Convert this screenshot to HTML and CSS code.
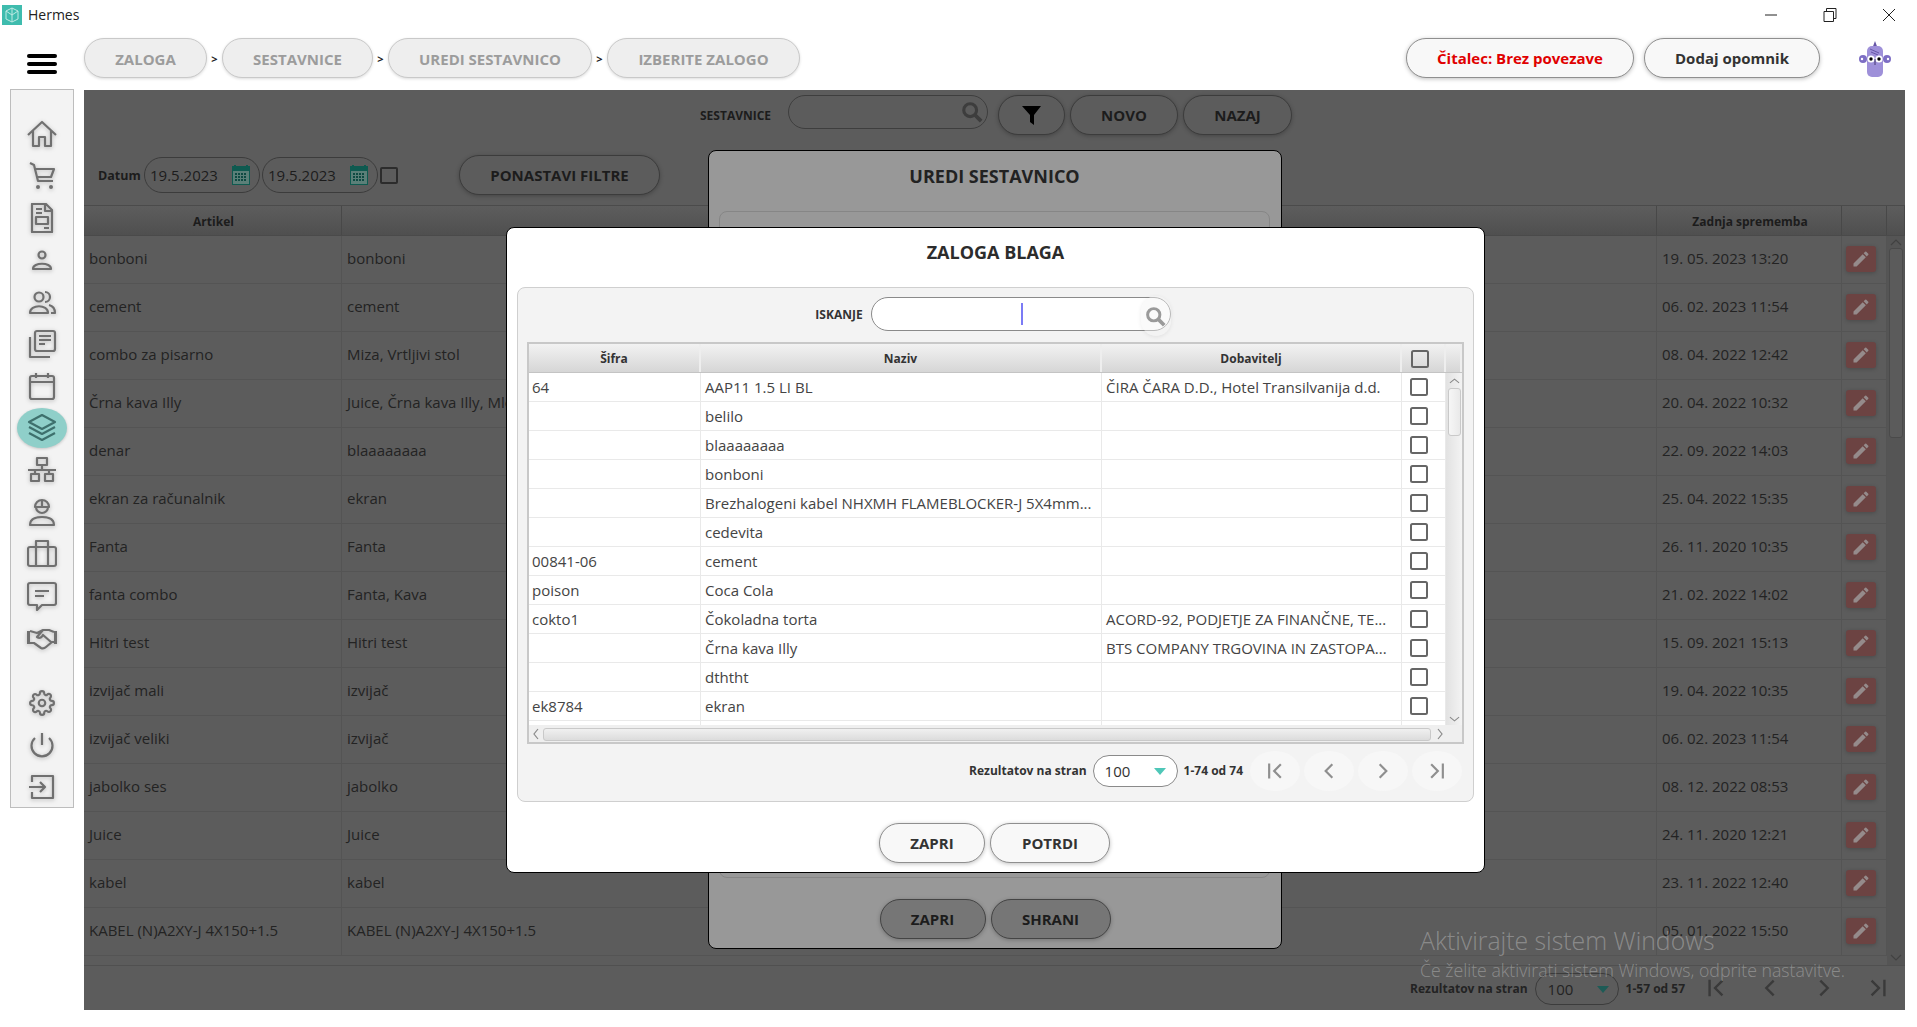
FILE: index.html
```html
<!DOCTYPE html>
<html lang="sl">
<head>
<meta charset="utf-8">
<title>Hermes</title>
<link rel="stylesheet" href="styles.css">
</head>
<body>
<svg class="sprite" aria-hidden="true">
  <symbol id="pencil" viewBox="0 0 24 24"><path d="M3 17.25V21h3.75L17.81 9.94l-3.75-3.75L3 17.25zM20.71 7.04a1 1 0 0 0 0-1.41l-2.34-2.34a1 1 0 0 0-1.41 0l-1.83 1.83 3.75 3.75 1.83-1.83z"/></symbol>
  <symbol id="first" viewBox="0 0 24 24"><path d="M5 3v18M19 4l-8 8 8 8" fill="none" stroke-width="2.6"/></symbol>
  <symbol id="prev" viewBox="0 0 24 24"><path d="M16 4l-8 8 8 8" fill="none" stroke-width="2.6"/></symbol>
  <symbol id="next" viewBox="0 0 24 24"><path d="M8 4l8 8-8 8" fill="none" stroke-width="2.6"/></symbol>
  <symbol id="last" viewBox="0 0 24 24"><path d="M19 3v18M5 4l8 8-8 8" fill="none" stroke-width="2.6"/></symbol>
  <symbol id="lens" viewBox="0 0 24 24"><circle cx="10" cy="10" r="7" fill="none" stroke-width="3.4"/><path d="M15 15l7 7" fill="none" stroke-width="4.2"/></symbol>
  <symbol id="cal" viewBox="0 0 20 20"><path d="M1 1h2V0h2v1h10V0h2v1h2v19H1z" fill="#0f5a50"/><path d="M2 6h16v13H2z" fill="#5b7f78"/><path d="M4 8h2v2H4zM7 8h2v2H7zM10 8h2v2h-2zM13 8h2v2h-2zM4 11h2v2H4zM7 11h2v2H7zM10 11h2v2h-2zM13 11h2v2h-2zM4 14h2v2H4zM7 14h2v2H7zM10 14h2v2h-2zM13 14h2v2h-2z" fill="#0f4a42"/></symbol>
</svg>

<header class="titlebar">
  <svg class="app-icon" viewBox="0 0 20 20"><rect width="20" height="20" fill="#3fbcae"/><path d="M4 6l6-3 6 3v8l-6 3-6-3zM10 3v14M4 6l6 4 6-4" fill="none" stroke="#bfeae4" stroke-width="1"/></svg>
  <span class="app-name">Hermes</span>
  <div class="win-controls">
    <svg class="win-ic" viewBox="0 0 16 16"><path d="M2 8h12" /></svg>
    <svg class="win-ic" viewBox="0 0 16 16"><path d="M2 4.500h9.500v10H2zM4.500 4.500V1.500h9.500v10h-2.500"/></svg>
    <svg class="win-ic" viewBox="0 0 16 16"><path d="M2 2l12 12M14 2L2 14"/></svg>
  </div>
</header>

<div class="topbar">
  <div class="burger"><i></i><i></i><i></i></div>
  <nav class="crumbs">
    <a class="crumb c1">ZALOGA</a><b class="sep">&gt;</b>
    <a class="crumb c2">SESTAVNICE</a><b class="sep">&gt;</b>
    <a class="crumb c3">UREDI SESTAVNICO</a><b class="sep">&gt;</b>
    <a class="crumb c4">IZBERITE ZALOGO</a>
  </nav>
  <button class="pill reader">Čitalec: Brez povezave</button>
  <button class="pill remind">Dodaj opomnik</button>
  <svg class="avatar" viewBox="0 0 32 37">
    <path d="M13 9l3-8 3 8z" fill="#6656a6"/>
    <rect x="8" y="6" width="16" height="31" rx="5" fill="#9e90d9"/>
    <path d="M11 9l9 4M12 12l7 3" stroke="#6656a6" stroke-width="1"/>
    <circle cx="4" cy="19" r="4" fill="#7d6ec4"/><circle cx="28" cy="19" r="4" fill="#7d6ec4"/>
    <circle cx="3" cy="19" r="1.200" fill="#fff"/><circle cx="29" cy="19" r="1.200" fill="#fff"/>
    <circle cx="12" cy="19" r="3.600" fill="#fff"/><circle cx="20" cy="19" r="3.600" fill="#fff"/>
    <circle cx="12" cy="19" r="1.700"/><circle cx="20" cy="19" r="1.700"/>
    <path d="M16 19v6" stroke="#44386f" stroke-width="1"/>
  </svg>
</div>

<div class="workspace">
  <aside class="sidebar">
    <a class="nav"><svg class="ic" viewBox="0 0 30 30"><path d="M1 16L15 3l14 13M6 12v15h6v-9h6v9h6V12"/></svg></a>
    <a class="nav"><svg class="ic" viewBox="0 0 30 30"><path d="M3 2l4 2 4 16h15M7 8h20l-3 8H10"/><circle class="fill" cx="11" cy="26" r="2"/><circle class="fill" cx="24" cy="26" r="2"/></svg></a>
    <a class="nav"><svg class="ic" viewBox="0 0 30 30"><path d="M5 1h14l6 6v22H5zM18 1v7h7M9 6h6M9 10h6M9 14h12v7H9zM17 25h5"/></svg></a>
    <a class="nav"><svg class="ic" viewBox="0 0 30 30"><circle cx="15" cy="10" r="3.500"/><path d="M6 24c0-7 18-7 18 0z"/></svg></a>
    <a class="nav"><svg class="ic" viewBox="0 0 30 30"><circle cx="12" cy="10" r="4.500"/><path d="M3 26c0-9 18-9 18 0zM18 5a5 5 0 0 1 0 10M22 18c4 1 6 4 6 8h-4"/></svg></a>
    <a class="nav"><svg class="ic" viewBox="0 0 30 30"><rect x="8" y="2" width="20" height="20" rx="2"/><path d="M12 7h12M12 11h12M12 15h6M3 8v20h20"/></svg></a>
    <a class="nav"><svg class="ic" viewBox="0 0 30 30"><rect x="3" y="5" width="24" height="23" rx="2"/><path d="M3 11h24M9 2v5M21 2v5"/></svg></a>
    <a class="nav active"><svg class="ic layers" viewBox="0 0 30 30"><path d="M15 2l13 7-13 7L2 9zM2 14l13 7 13-7M2 20l13 7 13-7"/></svg></a>
    <a class="nav"><svg class="ic" viewBox="0 0 30 30"><rect x="10" y="3" width="10" height="7"/><path d="M15 10v5M1 15h28M8 15v4M22 15v4"/><rect x="4" y="19" width="8" height="7"/><rect x="18" y="19" width="8" height="7"/></svg></a>
    <a class="nav"><svg class="ic" viewBox="0 0 30 30"><path d="M8 10a7 7 0 0 1 14 0zM15 3v7M9 10a6 6 0 0 0 12 0M3 28c0-7 8-8 12-8s12 1 12 8z"/></svg></a>
    <a class="nav"><svg class="ic" viewBox="0 0 30 30"><rect x="1" y="8" width="28" height="19" rx="2"/><path d="M9 8V2h12v6M9 8v19M21 8v19"/></svg></a>
    <a class="nav"><svg class="ic" viewBox="0 0 30 30"><path d="M1 4a2 2 0 0 1 2-2h24a2 2 0 0 1 2 2v18a2 2 0 0 1-2 2H15l-5 5v-5H3a2 2 0 0 1-2-2zM8 10h14M8 15h9"/></svg></a>
    <a class="nav"><svg class="ic" viewBox="0 0 30 30"><path d="M3 8l7 2 6-3 6 0 5 2M3 20l4 0 7 5c2 1 3 1 5-1l6-5h3M16 7l-6 7c3 2 5 0 6-2l8 7"/><path class="fill" d="M0 8h3v13H0zM27 8h3v13h-3z"/></svg></a>
    <a class="nav spaced"><svg class="ic gear" viewBox="0 0 24 24"><path d="M19.400 15a1.650 1.650 0 0 0 .33 1.820l.06.06a2 2 0 0 1 0 2.830 2 2 0 0 1-2.830 0l-.06-.06a1.650 1.650 0 0 0-1.820-.33 1.650 1.650 0 0 0-1 1.510V21a2 2 0 0 1-2 2 2 2 0 0 1-2-2v-.09A1.650 1.650 0 0 0 9 19.400a1.650 1.650 0 0 0-1.820.33l-.06.06a2 2 0 0 1-2.830 0 2 2 0 0 1 0-2.830l.06-.06a1.650 1.650 0 0 0 .33-1.820 1.650 1.650 0 0 0-1.510-1H3a2 2 0 0 1-2-2 2 2 0 0 1 2-2h.09A1.650 1.650 0 0 0 4.600 9a1.650 1.650 0 0 0-.33-1.820l-.06-.06a2 2 0 0 1 0-2.830 2 2 0 0 1 2.830 0l.06.06a1.650 1.650 0 0 0 1.820.33H9a1.650 1.650 0 0 0 1-1.510V3a2 2 0 0 1 2-2 2 2 0 0 1 2 2v.09a1.650 1.650 0 0 0 1 1.510 1.650 1.650 0 0 0 1.820-.33l.06-.06a2 2 0 0 1 2.830 0 2 2 0 0 1 0 2.830l-.06.06a1.650 1.650 0 0 0-.33 1.820V9a1.650 1.650 0 0 0 1.510 1H21a2 2 0 0 1 2 2 2 2 0 0 1-2 2h-.09a1.650 1.650 0 0 0-1.510 1z"/><circle cx="12" cy="12" r="3"/></svg></a>
    <a class="nav"><svg class="ic" viewBox="0 0 30 30"><path d="M15 3v12M8 8a10.500 10.500 0 1 0 14 0"/></svg></a>
    <a class="nav"><svg class="ic" viewBox="0 0 30 30"><path d="M5 10V4h21v22H5v-6M2 15h16M13 10l5 5-5 5"/></svg></a>
  </aside>

  <main class="main">
    <div class="toolbar">
      <span class="tool-label">SESTAVNICE</span>
      <div class="dim-search"><svg class="lens-dim"><use href="#lens"/></svg></div>
      <button class="dim-btn filter"><svg class="funnel" viewBox="0 0 19 19"><path d="M0 0h19l-7 9v10l-4-3V9z"/></svg></button>
      <button class="dim-btn wide">NOVO</button>
      <button class="dim-btn wide">NAZAJ</button>
    </div>
    <div class="filters">
      <span class="date-label">Datum</span>
      <div class="date">19.5.2023<svg class="cal-ic"><use href="#cal"/></svg></div>
      <div class="date">19.5.2023<svg class="cal-ic"><use href="#cal"/></svg></div>
      <i class="cb-dim"></i>
      <button class="dim-btn reset">PONASTAVI FILTRE</button>
    </div>
    <div class="thead">
      <div class="th">Artikel</div><div class="th"></div><div class="th">Zadnja sprememba</div><div class="th"></div><div class="th"></div>
    </div>
    <div class="tbody">
      <div class="rows">
        <div class="row"><span>bonboni</span><span>bonboni</span><span>19. 05. 2023 13:20</span><span class="act"><a class="edit"><svg><use href="#pencil"/></svg></a></span></div>
        <div class="row"><span>cement</span><span>cement</span><span>06. 02. 2023 11:54</span><span class="act"><a class="edit"><svg><use href="#pencil"/></svg></a></span></div>
        <div class="row"><span>combo za pisarno</span><span>Miza, Vrtljivi stol</span><span>08. 04. 2022 12:42</span><span class="act"><a class="edit"><svg><use href="#pencil"/></svg></a></span></div>
        <div class="row"><span>Črna kava Illy</span><span>Juice, Črna kava Illy, Mleko</span><span>20. 04. 2022 10:32</span><span class="act"><a class="edit"><svg><use href="#pencil"/></svg></a></span></div>
        <div class="row"><span>denar</span><span>blaaaaaaaa</span><span>22. 09. 2022 14:03</span><span class="act"><a class="edit"><svg><use href="#pencil"/></svg></a></span></div>
        <div class="row"><span>ekran za računalnik</span><span>ekran</span><span>25. 04. 2022 15:35</span><span class="act"><a class="edit"><svg><use href="#pencil"/></svg></a></span></div>
        <div class="row"><span>Fanta</span><span>Fanta</span><span>26. 11. 2020 10:35</span><span class="act"><a class="edit"><svg><use href="#pencil"/></svg></a></span></div>
        <div class="row"><span>fanta combo</span><span>Fanta, Kava</span><span>21. 02. 2022 14:02</span><span class="act"><a class="edit"><svg><use href="#pencil"/></svg></a></span></div>
        <div class="row"><span>Hitri test</span><span>Hitri test</span><span>15. 09. 2021 15:13</span><span class="act"><a class="edit"><svg><use href="#pencil"/></svg></a></span></div>
        <div class="row"><span>izvijač mali</span><span>izvijač</span><span>19. 04. 2022 10:35</span><span class="act"><a class="edit"><svg><use href="#pencil"/></svg></a></span></div>
        <div class="row"><span>izvijač veliki</span><span>izvijač</span><span>06. 02. 2023 11:54</span><span class="act"><a class="edit"><svg><use href="#pencil"/></svg></a></span></div>
        <div class="row"><span>jabolko ses</span><span>jabolko</span><span>08. 12. 2022 08:53</span><span class="act"><a class="edit"><svg><use href="#pencil"/></svg></a></span></div>
        <div class="row"><span>Juice</span><span>Juice</span><span>24. 11. 2020 12:21</span><span class="act"><a class="edit"><svg><use href="#pencil"/></svg></a></span></div>
        <div class="row"><span>kabel</span><span>kabel</span><span>23. 11. 2022 12:40</span><span class="act"><a class="edit"><svg><use href="#pencil"/></svg></a></span></div>
        <div class="row"><span>KABEL (N)A2XY-J 4X150+1.5</span><span>KABEL (N)A2XY-J 4X150+1.5</span><span>05. 01. 2022 15:50</span><span class="act"><a class="edit"><svg><use href="#pencil"/></svg></a></span></div>
      </div>
      <div class="vscroll-dim">
        <svg class="arrow-dim" viewBox="0 0 12 8"><path d="M1 7l5-5 5 5"/></svg>
        <div class="thumb-dim"></div>
        <svg class="arrow-dim" viewBox="0 0 12 8"><path d="M1 1l5 5 5-5"/></svg>
      </div>
    </div>
    <div class="foot">
      <span class="pg-label">Rezultatov na stran</span>
      <div class="select-dim">100<i class="tri-dim"></i></div>
      <span class="pg-label count-dim">1-57 od 57</span>
      <a class="pg-dim"><svg><use href="#first"/></svg></a>
      <a class="pg-dim"><svg><use href="#prev"/></svg></a>
      <a class="pg-dim"><svg><use href="#next"/></svg></a>
      <a class="pg-dim"><svg><use href="#last"/></svg></a>
    </div>

    <section class="dialog">
      <h2 class="dialog-title">UREDI SESTAVNICO</h2>
      <div class="dialog-panel"></div>
      <div class="dialog-actions">
        <button class="dim-btn act-a">ZAPRI</button>
        <button class="dim-btn act-b">SHRANI</button>
      </div>
    </section>
  </main>
</div>

<section class="modal">
  <h2 class="modal-title">ZALOGA BLAGA</h2>
  <div class="panel">
    <div class="search-row">
      <label class="search-label">ISKANJE</label>
      <div class="search">
        <i class="caret"></i>
        <span class="search-btn"><svg><use href="#lens"/></svg></span>
      </div>
    </div>
    <div class="mt">
      <div class="mt-head">
        <div>Šifra</div><div>Naziv</div><div>Dobavitelj</div><div class="mt-cbh"><i class="cb"></i></div><div></div>
      </div>
      <div class="mt-body">
        <div class="mt-rows">
          <div class="mt-row"><span>64</span><span>AAP11 1.5 LI BL</span><span>ČIRA ČARA D.D., Hotel Transilvanija d.d.</span><span class="mt-cb"><i class="cb"></i></span></div>
          <div class="mt-row"><span></span><span>belilo</span><span></span><span class="mt-cb"><i class="cb"></i></span></div>
          <div class="mt-row"><span></span><span>blaaaaaaaa</span><span></span><span class="mt-cb"><i class="cb"></i></span></div>
          <div class="mt-row"><span></span><span>bonboni</span><span></span><span class="mt-cb"><i class="cb"></i></span></div>
          <div class="mt-row"><span></span><span>Brezhalogeni kabel NHXMH FLAMEBLOCKER-J 5X4mm...</span><span></span><span class="mt-cb"><i class="cb"></i></span></div>
          <div class="mt-row"><span></span><span>cedevita</span><span></span><span class="mt-cb"><i class="cb"></i></span></div>
          <div class="mt-row"><span>00841-06</span><span>cement</span><span></span><span class="mt-cb"><i class="cb"></i></span></div>
          <div class="mt-row"><span>poison</span><span>Coca Cola</span><span></span><span class="mt-cb"><i class="cb"></i></span></div>
          <div class="mt-row"><span>cokto1</span><span>Čokoladna torta</span><span>ACORD-92, PODJETJE ZA FINANČNE, TE...</span><span class="mt-cb"><i class="cb"></i></span></div>
          <div class="mt-row"><span></span><span>Črna kava Illy</span><span>BTS COMPANY TRGOVINA IN ZASTOPA...</span><span class="mt-cb"><i class="cb"></i></span></div>
          <div class="mt-row"><span></span><span>dththt</span><span></span><span class="mt-cb"><i class="cb"></i></span></div>
          <div class="mt-row"><span>ek8784</span><span>ekran</span><span></span><span class="mt-cb"><i class="cb"></i></span></div>
          <div class="mt-row"><span></span><span></span><span></span><span></span></div>
        </div>
        <div class="vscroll">
          <svg class="arrow" viewBox="0 0 12 8"><path d="M1 6l5-4 5 4"/></svg>
          <div class="vthumb"></div>
          <svg class="arrow" viewBox="0 0 12 8"><path d="M1 2l5 4 5-4"/></svg>
        </div>
        <div class="hscroll">
          <svg class="arrow-h" viewBox="0 0 8 12"><path d="M6 1L2 6l4 5"/></svg>
          <div class="hthumb"></div>
          <svg class="arrow-h" viewBox="0 0 8 12"><path d="M2 1l4 5-4 5"/></svg>
        </div>
        <div class="corner"></div>
      </div>
    </div>
    <div class="pager">
      <span class="pg-label">Rezultatov na stran</span>
      <div class="select">100<i class="tri"></i></div>
      <span class="pg-label count">1-74 od 74</span>
      <a class="pg"><svg><use href="#first"/></svg></a>
      <a class="pg"><svg><use href="#prev"/></svg></a>
      <a class="pg"><svg><use href="#next"/></svg></a>
      <a class="pg"><svg><use href="#last"/></svg></a>
    </div>
  </div>
  <div class="modal-actions">
    <button class="pill act-a">ZAPRI</button>
    <button class="pill act-b">POTRDI</button>
  </div>
</section>

<aside class="watermark">
  <div class="wm-big">Aktivirajte sistem Windows</div>
  <div class="wm-small">Če želite aktivirati sistem Windows, odprite nastavitve.</div>
</aside>
</body>
</html>
```
FILE: styles.css
```css
* { box-sizing: border-box; }
html, body { margin: 0; padding: 0; }
body {
  width: 1917px; height: 1027px; overflow: hidden; position: relative;
  background: #fff; color: #333;
  font-family: "Open Sans", "Noto Sans", sans-serif;
}
button { font-family: inherit; cursor: pointer; margin: 0; padding: 0; }
.sprite { position: absolute; width: 0; height: 0; }

/* title bar */
.titlebar { height: 30px; display: flex; align-items: center; padding-left: 2px; }
.app-icon { width: 20px; height: 20px; }
.app-name { margin: -2px 0 0 6px; font-size: 14px; color: #222; }
.win-controls { margin-left: auto; display: flex; align-items: center; margin-right: 20px; gap: 43px; }
.win-ic { width: 16px; height: 16px; fill: none; stroke: #222; stroke-width: 1; }

/* top bar */
.topbar { height: 60px; display: flex; align-items: flex-start; padding: 8px 0 0 27px; }
.burger { width: 30px; height: 20px; margin: 16px 27px 0 0; display: flex; flex-direction: column; justify-content: space-between; }
.burger i { display: block; height: 4px; border-radius: 2px; background: #000; }
.crumbs { display: flex; align-items: center; height: 40px; }
.crumb {
  display: flex; align-items: center; justify-content: center; height: 40px;
  background: #eee; border: 1px solid #c9c9c9; border-radius: 20px;
  box-shadow: 0 1px 3px rgba(0,0,0,.14);
  font-size: 15px; font-weight: 700; color: #9c9c9c; padding-top: 1px;
}
.c1 { width: 123px; } .c2 { width: 151px; } .c3 { width: 204px; } .c4 { width: 193px; }
.sep { width: 15px; text-align: center; font-size: 11px; color: #222; }
.pill {
  height: 40px; background: #f8f8f8; border: 1px solid #8f8f8f; border-radius: 20px;
  box-shadow: 0 1px 4px rgba(0,0,0,.25);
  font-size: 15px; font-weight: 700; color: #333;
}
.reader { width: 228px; margin-left: auto; color: #e00000; }
.remind { width: 176px; margin-left: 10px; }
.avatar { width: 32px; height: 37px; margin: 2px 26px 0 39px; }

/* workspace */
.workspace { height: 920px; display: flex; padding-left: 10px; }
.sidebar {
  width: 64px; height: 719px; margin: -1px 10px 0 0; padding-top: 23px;
  background: #f3f3f3; border: 1px solid #bdbdbd;
  display: flex; flex-direction: column; align-items: center;
}
.nav { width: 50px; height: 42px; flex: none; display: flex; align-items: center; justify-content: center; }
.nav.spaced { margin-top: 23px; }
.nav.active { position: relative; }
.nav.active::before { content: ""; position: absolute; left: 0; top: 1px; width: 50px; height: 40px; border-radius: 25px / 20px; background: #8fcfc9; box-shadow: 0 1px 3px rgba(0,0,0,.2); }
.ic { width: 30px; height: 30px; fill: none; stroke: #707070; stroke-width: 2.200; stroke-linejoin: round; filter: drop-shadow(0 1px 2px rgba(0,0,0,.25)); position: relative; }
.ic .fill { fill: #707070; stroke: none; }
.ic.gear { width: 26px; height: 26px; stroke-width: 2; }
.ic.layers { stroke: #3e706d; filter: none; }

/* main (dimmed) */
.main { width: 1821px; height: 920px; position: relative; background: #5c5c5c; display: flex; flex-direction: column; color: #232323; }
.toolbar { display: flex; align-items: flex-start; padding: 5px 0 0 616px; height: 45px; }
.tool-label { width: 71px; height: 34px; line-height: 41px; font-size: 12px; font-weight: 700; color: #1c1c1c; white-space: nowrap; }
.dim-search { width: 200px; height: 34px; margin: 0 10px 0 17px; border: 1px solid #3e3e3e; border-radius: 17px; display: flex; justify-content: flex-end; align-items: center; padding-right: 4px; }
.lens-dim { width: 22px; height: 22px; fill: none; stroke: #3d3d3d; }
.dim-btn {
  height: 40px; background: #5c5c5c; border: 1px solid #3c3c3c; border-radius: 20px;
  box-shadow: 0 1px 4px rgba(0,0,0,.25); color: #1c1c1c; font-size: 15px; font-weight: 700;
}
.filter { width: 67px; display: flex; align-items: center; justify-content: center; }
.funnel { width: 19px; height: 19px; fill: #000; }
.wide { width: 108px; margin-left: 5px; }
.wide:last-child { width: 109px; }

.filters { display: flex; align-items: center; height: 40px; margin: 20px 0 10px; padding-left: 14px; }
.date-label { width: 46px; font-size: 12.500px; font-weight: 700; color: #1c1c1c; }
.date { width: 116px; height: 36px; margin-right: 2px; border: 1px solid #3c3c3c; border-radius: 18px; display: flex; align-items: center; justify-content: space-between; padding: 0 8px 0 5px; font-size: 15px; color: #1c1c1c; }
.cal-ic { width: 20px; height: 20px; }
.cb-dim { width: 18px; height: 17px; border: 2px solid #2c2c2c; border-radius: 2px; }
.reset { width: 201px; margin-left: 61px; }

.thead { display: grid; grid-template-columns: 258px 1315px 185px 45px 18px; height: 31px; background: linear-gradient(#5d5d5d, #4f4f4f); border-top: 1px solid #4b4b4b; border-bottom: 1px solid #4a4a4a; }
.th { display: flex; align-items: center; justify-content: center; padding: 1px 0 0 2px; font-size: 12px; font-weight: 700; color: #1c1c1c; border-right: 1px solid #484848; }
.tbody { flex: 1; min-height: 0; display: flex; overflow: hidden; }
.rows { flex: 1; min-width: 0; }
.row { display: grid; grid-template-columns: 258px 1315px 185px 45px; height: 48px; border-bottom: 1px solid #545454; align-items: stretch; font-size: 15px; }
.row > span { display: flex; align-items: center; padding: 0 0 3px 5px; border-right: 1px solid #545454; white-space: nowrap; overflow: hidden; }
.row > span.act { padding: 0 0 2px 4px; }
.edit { width: 30px; height: 26px; border-radius: 3px; background: #6c4342; display: flex; align-items: center; justify-content: center; box-shadow: 0 1px 4px rgba(0,0,0,.2); }
.edit svg { width: 20px; height: 20px; fill: #958b8b; }
.vscroll-dim { width: 18px; background: #555; display: flex; flex-direction: column; align-items: center; padding: 2px 0 3px; }
.thumb-dim { flex: none; width: 14px; height: 190px; margin-top: 2px; background: #5b5b5b; border: 1px solid #4a4a4a; border-radius: 3px; }
.arrow-dim { flex: none; width: 12px; height: 8px; fill: none; stroke: #424242; stroke-width: 1.200; }
.arrow-dim:last-child { margin-top: auto; }
.foot { height: 45px; border-top: 1px solid #505050; display: flex; align-items: center; justify-content: flex-end; padding-right: 2px; gap: 7px; }
.pg-label { font-size: 12px; font-weight: 700; white-space: nowrap; }
.select-dim { width: 84px; height: 32px; margin-top: 2px; border: 1px solid #3c3c3c; border-radius: 16px; display: flex; align-items: center; justify-content: space-between; padding: 0 9px 0 12px; font-size: 15px; }
.tri-dim { width: 0; height: 0; border: 6px solid transparent; border-top: 7px solid #1e5b56; border-bottom: 0; }
.count-dim { margin-right: 2px; }
.pg-dim { width: 50px; height: 40px; margin-left: -3px; display: flex; align-items: center; justify-content: center; }
.pg-dim svg { width: 22px; height: 22px; fill: none; stroke: #3a3a3a; }

/* underlying dialog */
.dialog { position: absolute; left: 624px; top: 60px; width: 574px; height: 799px; background: #989898; border: 1px solid #000; border-radius: 8px; display: flex; flex-direction: column; padding: 0 11px 9px 10px; }
.dialog-title { margin: 0; height: 60px; flex: none; line-height: 50px; text-align: center; font-size: 18px; font-weight: 700; color: #222; }
.dialog-panel { flex: 1; min-height: 0; border: 1px solid #868686; border-radius: 8px; }
.dialog-actions { flex: none; display: flex; justify-content: center; gap: 5px; margin: 21px 0 0 1px; }
.dialog-actions .dim-btn { background: #767676; border-color: #444; }
.act-a { width: 106px; }
.act-b { width: 120px; }

/* modal */
.modal { position: absolute; left: 506px; top: 227px; width: 979px; height: 646px; background: #fff; border: 1px solid #000; border-radius: 8px; display: flex; flex-direction: column; padding: 0 10px; }
.modal-title { margin: 0; height: 59px; flex: none; line-height: 48px; text-align: center; font-size: 18px; font-weight: 700; color: #2c2c2c; }
.panel { flex: none; height: 515px; background: #f3f3f3; border: 1px solid #cfcfcf; border-radius: 8px; padding: 9px 9px 0; display: flex; flex-direction: column; }
.search-row { display: flex; align-items: center; justify-content: center; height: 34px; flex: none; padding-right: 5px; }
.search-label { font-size: 12px; font-weight: 700; color: #333; margin-right: 8px; }
.search { position: relative; width: 300px; height: 34px; background: #fff; border: 1px solid #8a8a8a; border-radius: 17px; }
.caret { position: absolute; left: 149px; top: 5px; width: 2px; height: 22px; background: #7b7bf5; }
.search-btn { position: absolute; right: -1px; top: -2px; width: 30px; height: 40px; border-radius: 15px; background: rgba(243,243,243,.45); display: flex; align-items: center; justify-content: center; box-shadow: 0 1px 4px rgba(0,0,0,.08); }
.search-btn svg { width: 21px; height: 21px; fill: none; stroke: #9a9a9a; }

.mt { flex: none; width: 937px; height: 402px; margin-top: 11px; border: 2px solid #c8c8c8; background: #fff; display: flex; flex-direction: column; }
.mt-head { flex: none; height: 29px; display: grid; grid-template-columns: 172px 401px 300px 44px 16px; background: linear-gradient(#f2f2f2, #d6d6d6); border-bottom: 1px solid #c4c4c4; }
.mt-head > div { display: flex; align-items: center; justify-content: center; padding-top: 1px; font-size: 12px; font-weight: 700; color: #333; border-right: 2px solid #eee; }
.mt-head > .mt-cbh { justify-content: flex-start; padding-left: 9px; }
.cb { display: block; width: 18px; height: 18px; background: #fff; border: 2px solid #666; border-radius: 2.500px; }
.mt-cbh .cb { background: transparent; }
.mt-body { flex: 1; min-height: 0; display: grid; grid-template-columns: 917px 16px; grid-template-rows: 352px 17px; }
.mt-rows { overflow: hidden; }
.mt-row { display: grid; grid-template-columns: 172px 401px 300px 44px; height: 29px; border-bottom: 1px solid #e9e9e9; font-size: 15px; color: #444; }
.mt-row > span { display: flex; align-items: center; padding-left: 3px; border-right: 1px solid #e9e9e9; white-space: nowrap; overflow: hidden; }
.mt-row > span:nth-child(2), .mt-row > span:nth-child(3) { padding-left: 4px; }
.mt-row > span.mt-cb { padding-left: 8px; }
.vscroll { background: linear-gradient(90deg, #e2e2e2, #f3f3f3); display: flex; flex-direction: column; align-items: center; padding-top: 4px; }
.vthumb { flex: none; width: 13px; height: 48px; margin-top: 3px; background: linear-gradient(90deg, #f6f6f6, #e9e9e9); border: 1px solid #c9c9c9; border-radius: 3px; }
.arrow { flex: none; width: 11px; height: 8px; fill: none; stroke: #8a8a8a; stroke-width: 1.200; }
.arrow:last-child { margin-top: auto; margin-bottom: 2px; }
.hscroll { background: #efefef; display: flex; align-items: center; padding: 0 4px 0 3px; }
.hthumb { flex: none; width: 888px; height: 13px; margin: 2px 5px 0 3px; background: linear-gradient(#f0f0f0, #dcdcdc); border: 1px solid #c9c9c9; border-radius: 3px; }
.arrow-h { flex: none; width: 8px; height: 12px; fill: none; stroke: #8a8a8a; stroke-width: 1.200; }
.corner { background: #efefef; }

.pager { flex: 1; display: flex; align-items: flex-start; justify-content: flex-end; margin-top: 7px; gap: 6px; padding-right: 2px; }
.pager .pg-label { line-height: 40px; color: #333; }
.select { width: 85px; height: 32px; margin-top: 4px; background: #fff; border: 1px solid #8a8a8a; border-radius: 16px; display: flex; align-items: center; justify-content: space-between; padding: 0 11px; font-size: 15px; color: #333; }
.tri { width: 0; height: 0; border: 6px solid transparent; border-top: 7px solid #4fc7b8; border-bottom: 0; }
.count { margin-right: 3px; }
.pg { width: 50px; height: 40px; margin-left: -2px; border-radius: 25px / 20px; background: #f7f7f7; display: flex; align-items: center; justify-content: center; }
.pg svg { width: 20px; height: 20px; fill: none; stroke: #8f8f8f; }
.modal-actions { display: flex; justify-content: center; gap: 5px; margin: 21px 2px 0 0; }

/* activation watermark */
.watermark { position: absolute; left: 1420px; top: 925px; color: rgba(255,255,255,.3); pointer-events: none; white-space: nowrap; }
.wm-big { font-size: 24.800px; font-weight: 300; line-height: 30px; }
.wm-small { font-size: 17.700px; font-weight: 300; line-height: 30px; }
```
